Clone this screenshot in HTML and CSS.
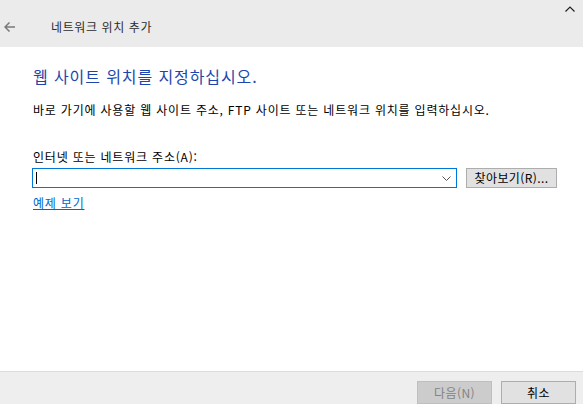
FILE: index.html
```html
<!DOCTYPE html>
<html lang="ko">
<head>
    <meta charset="UTF-8">
    <meta name="viewport" content="width=device-width, initial-scale=1.0">
    <title>네트워크 위치 추가</title>
    <link rel="stylesheet" href="styles.css">
</head>
<body>

<div class="wizard">
    <div class="wizard-header">
        <span class="back-arrow">
            <svg width="12" height="10" viewBox="0 0 12 10">
                <path d="M5.5 0.5 L1 5 L5.5 9.5 M1 5 H11" fill="none" stroke="#7a7a7a" stroke-width="1.5"/>
            </svg>
        </span>
        <span class="wizard-title">네트워크 위치 추가</span>
        <span class="close-x">
            <svg width="10" height="6" viewBox="0 0 10 6">
                <path d="M0.5 5.5 L5 1 L9.5 5.5" fill="none" stroke="#222" stroke-width="1.2"/>
            </svg>
        </span>
    </div>

    <div class="wizard-body">
        <h1 class="main-instruction">웹 사이트 위치를 지정하십시오.</h1>
        <p class="description">바로 가기에 사용할 웹 사이트 주소, FTP 사이트 또는 네트워크 위치를 입력하십시오.</p>

        <label class="field-label" for="address">인터넷 또는 네트워크 주소(A):</label>
        <div class="address-row">
            <div class="combo">
                <span class="caret"></span>
                <svg class="combo-arrow" width="9" height="5" viewBox="0 0 9 5">
                    <path d="M0.5 0.5 L4.5 4.5 L8.5 0.5" fill="none" stroke="#555" stroke-width="1"/>
                </svg>
            </div>
            <button class="btn browse">찾아보기(R)...</button>
        </div>
        <a class="example-link" href="#">예제 보기</a>
    </div>

    <div class="wizard-footer">
        <button class="btn footer-btn" disabled>다음(N)</button>
        <button class="btn footer-btn">취소</button>
    </div>
</div>

</body>
</html>
```

FILE: styles.css
```css
body {
    margin: 0;
    font-family: "Noto Sans CJK KR", "Noto Sans", sans-serif;
    font-size: 12px;
    letter-spacing: 0.8px;
    color: #000;
    background: #fff;
}

.wizard {
    width: 583px;
    height: 404px;
    display: flex;
    flex-direction: column;
    overflow: hidden;
}

.wizard-header {
    height: 47px;
    background-color: #ebebeb;
    display: flex;
    align-items: center;
    position: relative;
}

.back-arrow {
    width: 12px;
    height: 10px;
    margin-left: 4px;
    margin-top: 6px;
    display: flex;
}

.wizard-title {
    margin-left: 35px;
    margin-top: 6px;
    font-size: 12px;
    letter-spacing: 0.6px;
    color: #2b2b2b;
}

.close-x {
    position: absolute;
    right: 8px;
    top: -2px;
}

.wizard-body {
    flex: 1;
    padding: 0 0 0 33px;
}

.main-instruction {
    margin: 18px 0 0 0;
    font-size: 16px;
    letter-spacing: 0.9px;
    font-weight: normal;
    line-height: 22px;
    color: #1c46ae;
}

.description {
    margin: 14px 0 0 0;
    line-height: 18px;
}

.field-label {
    display: block;
    margin-top: 29px;
    line-height: 18px;
}

.address-row {
    display: flex;
    align-items: center;
    margin-top: 2px;
}

.combo {
    width: 415px;
    height: 18px;
    margin-left: -1px;
    border: 1px solid #0078d7;
    display: flex;
    align-items: center;
    justify-content: space-between;
    padding: 0 5px 0 3px;
}

.caret {
    width: 1px;
    height: 12px;
    background-color: #000;
}

.btn {
    font-family: "Noto Sans CJK KR", "Noto Sans", sans-serif;
    font-size: 12px;
    letter-spacing: 0.4px;
    background-color: #e1e1e1;
    border: 1px solid #adadad;
    color: #000;
    padding: 0;
}

.browse {
    width: 91px;
    height: 20px;
    margin-left: 9px;
    line-height: 16px;
}

.example-link {
    display: inline-block;
    margin-top: 6px;
    color: #0066cc;
    line-height: 18px;
}

.wizard-footer {
    height: 32px;
    border-top: 1px solid #dcdcdc;
    background-color: #eeeeee;
    display: flex;
    justify-content: flex-end;
    align-items: flex-start;
    padding-right: 7px;
    gap: 9px;
}

.footer-btn {
    width: 75px;
    height: 23px;
    margin-top: 9px;
}

.footer-btn:disabled {
    background-color: #cccccc;
    border-color: #bfbfbf;
    color: #838383;
}
```
